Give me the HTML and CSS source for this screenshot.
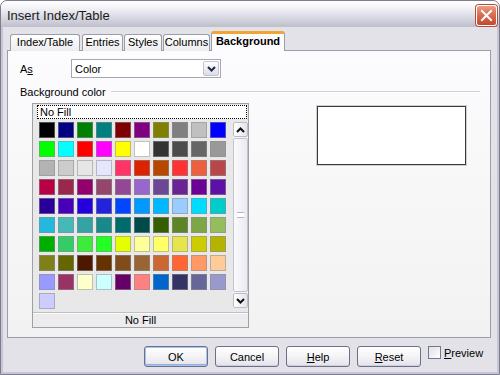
FILE: index.html
```html
<!DOCTYPE html>
<html>
<head>
<meta charset="utf-8">
<link rel="stylesheet" href="styles.css">
</head>
<body>
<div class="window">
  <div class="titlebar">
    <span class="title">Insert Index/Table</span>
    <span class="close"><svg width="19" height="19" viewBox="0 0 19 19"><path d="M5 5 L14 14 M14 5 L5 14" stroke="#fff" stroke-width="2" stroke-linecap="square"/></svg></span>
  </div>
  <div class="client">
    <div class="tabs">
      <div class="tab w1">Index/Table</div>
      <div class="tab w2">Entries</div>
      <div class="tab w3">Styles</div>
      <div class="tab w4">Columns</div>
      <div class="tab sel">Background</div>
    </div>
    <div class="panel">
      <div class="as-row">
        <span class="as-label">A<u>s</u></span>
        <div class="combo">
          <span class="combo-text">Color</span>
          <span class="combo-btn"><svg width="9" height="6" viewBox="0 0 9 6"><path d="M1 1 L4.5 4.5 L8 1" fill="none" stroke="#1e2b4a" stroke-width="2"/></svg></span>
        </div>
      </div>
      <div class="group-head">
        <span>Background color</span>
        <span class="rule"></span>
      </div>
      <div class="group-body">
        <div class="listbox">
          <div class="nofill-top">No Fill</div>
          <div class="grid-area">
            <div class="swatches">
              <i style="background:#000000"></i><i style="background:#000080"></i><i style="background:#008000"></i><i style="background:#008080"></i><i style="background:#800000"></i><i style="background:#800080"></i><i style="background:#808000"></i><i style="background:#808080"></i><i style="background:#c0c0c0"></i><i style="background:#0000ff"></i>
              <i style="background:#00ff00"></i><i style="background:#00ffff"></i><i style="background:#ff0000"></i><i style="background:#ff00ff"></i><i style="background:#ffff00"></i><i style="background:#ffffff"></i><i style="background:#333333"></i><i style="background:#4c4c4c"></i><i style="background:#666666"></i><i style="background:#999999"></i>
              <i style="background:#b3b3b3"></i><i style="background:#cccccc"></i><i style="background:#e6e6e6"></i><i style="background:#e6e6ff"></i><i style="background:#ff3366"></i><i style="background:#dc2300"></i><i style="background:#b84700"></i><i style="background:#ff3333"></i><i style="background:#eb613d"></i><i style="background:#b84747"></i>
              <i style="background:#b80047"></i><i style="background:#99284c"></i><i style="background:#94006b"></i><i style="background:#94476b"></i><i style="background:#944794"></i><i style="background:#9966cc"></i><i style="background:#6b4794"></i><i style="background:#6b2394"></i><i style="background:#6b0094"></i><i style="background:#5e11a6"></i>
              <i style="background:#280099"></i><i style="background:#4700b8"></i><i style="background:#2300dc"></i><i style="background:#2323dc"></i><i style="background:#0047ff"></i><i style="background:#0099ff"></i><i style="background:#00b8ff"></i><i style="background:#99ccff"></i><i style="background:#00dcff"></i><i style="background:#00cccc"></i>
              <i style="background:#23b8dc"></i><i style="background:#47b8b8"></i><i style="background:#33a3a3"></i><i style="background:#198a8a"></i><i style="background:#006b6b"></i><i style="background:#004a4a"></i><i style="background:#355e00"></i><i style="background:#5c8526"></i><i style="background:#7da647"></i><i style="background:#94bd5e"></i>
              <i style="background:#00ae00"></i><i style="background:#33cc66"></i><i style="background:#3deb3d"></i><i style="background:#23ff23"></i><i style="background:#e6ff00"></i><i style="background:#ffff99"></i><i style="background:#ffff66"></i><i style="background:#e6e64c"></i><i style="background:#cccc00"></i><i style="background:#b3b300"></i>
              <i style="background:#808019"></i><i style="background:#666600"></i><i style="background:#4c1900"></i><i style="background:#663300"></i><i style="background:#804c19"></i><i style="background:#996633"></i><i style="background:#cc6633"></i><i style="background:#ff6633"></i><i style="background:#ff9966"></i><i style="background:#ffcc99"></i>
              <i style="background:#9999ff"></i><i style="background:#993366"></i><i style="background:#ffffcc"></i><i style="background:#ccffff"></i><i style="background:#660066"></i><i style="background:#ff8080"></i><i style="background:#0066cc"></i><i style="background:#333366"></i><i style="background:#666699"></i><i style="background:#9999cc"></i>
              <i style="background:#ccccff"></i>
            </div>
            <div class="scrollbar">
              <span class="sb-btn"><svg width="9" height="6" viewBox="0 0 9 6"><path d="M1 5 L4.5 1.5 L8 5" fill="none" stroke="#111" stroke-width="2"/></svg></span>
              <span class="sb-thumb"><span class="grip"></span></span>
              <span class="sb-btn"><svg width="9" height="6" viewBox="0 0 9 6"><path d="M1 1 L4.5 4.5 L8 1" fill="none" stroke="#111" stroke-width="2"/></svg></span>
            </div>
          </div>
          <div class="nofill-bottom">No Fill</div>
        </div>
        <div class="preview"></div>
      </div>
    </div>
    <div class="buttons">
      <span class="btn default">OK</span>
      <span class="btn">Cancel</span>
      <span class="btn"><u>H</u>elp</span>
      <span class="btn"><u>R</u>eset</span>
      <span class="check"><span class="box"></span><span class="check-label"><u>P</u>review</span></span>
    </div>
  </div>
</div>
</body>
</html>
```
FILE: styles.css
```css
* { box-sizing: border-box; }
html, body { margin: 0; padding: 0; }
body {
  width: 500px; height: 375px; overflow: hidden;
  font-family: "Liberation Sans", Arial, sans-serif;
  font-size: 11px; color: #000; background: #fff;
}
.window {
  width: 500px; height: 375px;
  display: flex; flex-direction: column;
  border: 1px solid #7c7c90;
  border-radius: 7px 7px 0 0;
  background: #c6c6d2;
}
.titlebar {
  height: 26px; flex: none;
  display: flex; align-items: flex-start; justify-content: space-between;
  padding: 4px 2px 0 6px;
  border-radius: 6px 6px 0 0;
  background: linear-gradient(#ffffff 0%, #f4f4f8 25%, #dedee7 55%, #cacad6 85%, #bebeca 100%);
}
.title {
  font-size: 13px; line-height: 20px; color: #1a1a1a;
  padding-top: 1px;
}
.close {
  width: 21px; height: 21px;
  border: 1px solid #fff; border-radius: 3px;
  box-shadow: 0 0 0 1px #b0503a;
  background: linear-gradient(#eaa088 0%, #dc7257 40%, #c8472c 100%);
  display: flex; align-items: center; justify-content: center;
}
.close svg { display: block; }
.client {
  flex: 1;
  margin: 0 2px 2px 2px;
  background: #e3e2e8;
  padding: 4px 6px 0 4px;
  display: flex; flex-direction: column;
}
.tabs {
  display: flex; align-items: flex-end;
  height: 20px;
  padding-left: 3px;
  gap: 1px;
  position: relative; z-index: 1;
  margin-bottom: -1px;
}
.tab {
  height: 17px;
  border: 1px solid #9a9ea8; border-bottom: none;
  border-radius: 3px 3px 0 0;
  background: linear-gradient(#ffffff, #ecebee);
  text-align: center; line-height: 15px;
}
.w1 { width: 70px; margin-right: 1px; }
.w2 { width: 41px; }
.w3 { width: 38px; }
.w4 { width: 47px; }
.tab.sel {
  width: 74px; height: 20px;
  font-weight: bold;
  background: #fcfcfe;
  border-top: 3px solid #f0a530;
  line-height: 15px;
}
.panel {
  height: 288px;
  border: 1px solid #9a9ea8;
  background: linear-gradient(#fcfcfe, #f2f2f2);
  padding: 0;
}
.as-row {
  display: flex; align-items: center;
  padding: 8px 0 0 12px;
}
.as-label { width: 51px; }
.combo {
  width: 150px; height: 19px;
  border: 1px solid #a4a8b4;
  background: #fff;
  display: flex; align-items: center; justify-content: space-between;
  padding: 0 1px 0 3px;
}
.combo-btn {
  width: 16px; height: 15px;
  border: 1px solid #c3c3d0; border-radius: 2px;
  background: linear-gradient(#ffffff, #dcdce6);
  display: flex; align-items: center; justify-content: center;
}
.group-head {
  display: flex; align-items: center; gap: 5px;
  margin: 7px 10px 0 12px;
  height: 13px;
}
.rule {
  flex: 1; height: 2px;
  border-top: 1px solid #cfcfcf; border-bottom: 1px solid #ffffff;
}
.group-body {
  display: flex; align-items: flex-start;
  margin: 5px 0 0 24px;
}
.listbox {
  width: 217px; height: 225px;
  border: 1px solid #a0a0a4;
  background: #e8e8e9;
  display: flex; flex-direction: column;
}
.nofill-top {
  height: 14px;
  margin: 1px 1px 0 4px;
  border: 1px dotted #000;
  background: #fff;
  line-height: 12px; padding-left: 2px;
}
.grid-area {
  display: flex; align-items: flex-start;
  height: 193px;
  padding: 3px 0 0 6px;
}
.swatches {
  display: grid;
  grid-template-columns: repeat(10, 16px);
  grid-auto-rows: 16px;
  gap: 3px;
}
.swatches i {
  display: block; width: 16px; height: 16px;
  box-shadow: inset 0 0 0 1px rgba(140, 140, 150, 0.55);
}
.scrollbar {
  margin-left: 7px;
  width: 15px; height: 186px;
  display: flex; flex-direction: column; gap: 1px;
  background: #f4f4f6;
}
.sb-btn {
  height: 15px; flex: none;
  border: 1px solid #bcbcc8; border-radius: 2px;
  background: linear-gradient(90deg, #ffffff, #e4e4ec);
  display: flex; align-items: center; justify-content: center;
}
.sb-thumb {
  flex: 1;
  border: 1px solid #c4c4d0; border-radius: 2px;
  background: linear-gradient(90deg, #fbfbfd, #eaeaf0);
  display: flex; align-items: center; justify-content: center;
}
.grip {
  width: 7px; height: 6px;
  border-top: 1px solid #b8b8c4; border-bottom: 1px solid #b8b8c4;
  background: linear-gradient(#fff 0 40%, #b8b8c4 40% 60%, #fff 60%);
}
.nofill-bottom {
  flex: 1;
  border-top: 1px solid #c0c0c4;
  box-shadow: inset 0 1px 0 #fafafa;
  text-align: center;
  line-height: 14px;
  background: #ececee;
}
.preview {
  width: 149px; height: 59px;
  margin: 3px 0 0 68px;
  border: 1px solid #3a3a3a;
  background: #fff;
  box-shadow: 0 0 0 1px #d0d0d0;
}
.buttons {
  display: flex; align-items: flex-start;
  gap: 7px;
  margin-top: 8px;
  padding-left: 137px;
}
.btn {
  width: 64px; height: 21px;
  border: 1px solid #6e7088; border-radius: 3px;
  background: linear-gradient(#ffffff 0%, #f4f4f6 50%, #e2e2ea 100%);
  box-shadow: inset 0 -1px 0 #d0d0dc;
  display: flex; align-items: center; justify-content: center;
}
.btn.default {
  box-shadow: inset 0 0 0 1px #a8c4ec, inset 0 -2px 0 #8fb0e4;
}
.check {
  display: flex; align-items: flex-start; gap: 3px;
}
.box {
  width: 13px; height: 13px;
  border: 1px solid #6e7a94;
  background: linear-gradient(135deg, #e0e0e6, #ffffff);
}
.check-label { line-height: 13px; padding-top: 1px; }
```
